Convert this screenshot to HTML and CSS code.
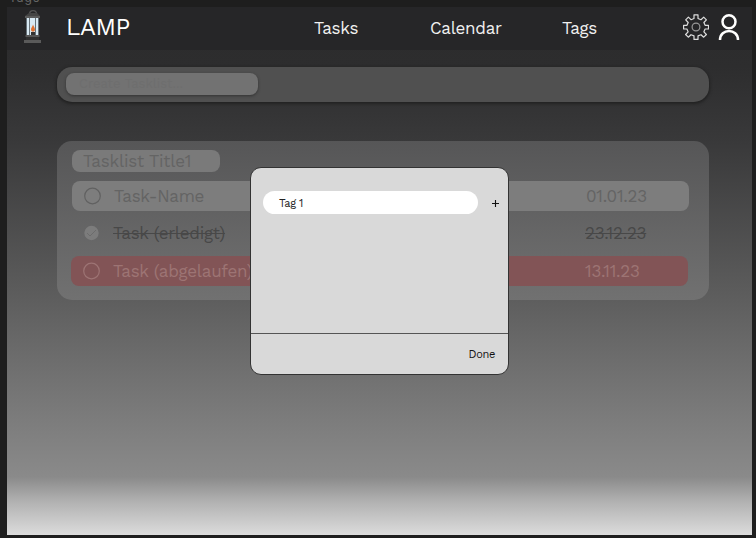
FILE: index.html
```html
<!DOCTYPE html>
<html lang="de">
<head>
<meta charset="utf-8">
<title>Lamp</title>
<link rel="stylesheet" href="styles.css">
</head>
<body>
<div class="label">Tags</div>
<div class="frame">
  <header class="header">
    <svg class="lamp" width="20" height="34" viewBox="0 0 20 34">
      <path d="M6.500 4C6.500-.5 13.500-.5 13.500 4" fill="none" stroke="#555" stroke-width="1.200"/>
      <path d="M6 3h8l3 3v2H2V6z" fill="#444"/>
      <path d="M2 6h15v2H2z" fill="#5a5a5a"/>
      <path d="M3 8h13v17H3z" fill="#d8e9f3"/>
      <path d="M3.500 8v17M6.500 8v17M12.500 8v17M15.500 8v17" stroke="#59636a" stroke-width=".9"/>
      <path d="M10 14.500C10.500 16.500 12 17.500 12 19.500C12 22.500 8 22.500 8 19.500C8 17.500 9.500 17 10 14.500z" fill="#df7130"/>
      <path d="M8 22h4v3H8z" fill="#333"/>
      <path d="M2.500 25h14v2h-14z" fill="#555"/>
      <path d="M3 27h13v3H3z" fill="#303030"/>
      <path d="M1 30h17v3H1z" fill="#5a5a5a"/>
    </svg>
    <div class="brand">LAMP</div>
    <nav class="nav"><a>Tasks</a><a>Calendar</a><a>Tags</a></nav>
    <svg class="gear" width="26" height="26" viewBox="0 0 26 26" fill="none" stroke="#ddd" stroke-width="1.2" stroke-linejoin="round">
      <path d="M11 .8h4v3.700l3 1.200 2.700-2.600 2.700 2.700-2.500 2.700 1.200 2.800h3.400v3.700h-3.400l-1.200 2.800 2.500 2.700-2.700 2.700-2.700-2.500-3 1.200v3.500h-4v-3.500l-3-1.200-2.700 2.500-2.700-2.700 2.500-2.700-1.200-2.800H.6v-3.700H4l1.200-2.800-2.500-2.700 2.700-2.700L8 5.700l3-1.200z"/>
      <circle cx="13" cy="13" r="3.900" stroke="#999"/>
    </svg>
    <svg class="user" width="22" height="28" viewBox="0 0 22 28" fill="none" stroke="#fff" stroke-width="2.500">
      <circle cx="11" cy="8.800" r="6.500"/>
      <path d="M2 27C2 15 20 15 20 27"/>
    </svg>
  </header>
  <main class="content">
    <section class="create"><div class="create-input">Create Tasklist...</div></section>
    <section class="list">
      <div class="title">Tasklist Title1</div>
      <div class="task">
        <svg class="check" width="18" height="18" viewBox="0 0 18 18"><circle cx="8.500" cy="9" r="7.800" fill="none" stroke="#616161" stroke-width="1.2"/></svg>
        <span class="name">Task-Name</span><span class="date">01.01.23</span>
      </div>
      <div class="task done">
        <svg class="check" width="18" height="18" viewBox="0 0 18 18"><circle cx="8.500" cy="9" r="7.200" fill="#7c7c7c"/><path d="M4 9l3 3 6-6" fill="none" stroke="#6c6c6c"/></svg>
        <span class="name">Task (erledigt)</span><span class="date">23.12.23</span>
      </div>
      <div class="task late">
        <svg class="check" width="18" height="18" viewBox="0 0 18 18"><circle cx="8.500" cy="9" r="7.800" fill="none" stroke="#9d7474" stroke-width="1.2"/></svg>
        <span class="name">Task (abgelaufen)</span><span class="date">13.11.23</span>
      </div>
    </section>
  </main>
</div>
<div class="modal">
  <div class="modal-body"><div class="tag">Tag 1</div>
    <svg class="plus" width="7" height="7" viewBox="0 0 7 7"><path d="M3.500 0v7M0 3.500h7" stroke="#111" stroke-width="1.100"/></svg>
  </div>
  <div class="modal-foot">Done</div>
</div>
</body>
</html>
```
FILE: styles.css
```css
* { box-sizing: border-box; }
body {
  margin: 0;
  width: 756px;
  height: 538px;
  overflow: hidden;
  background: #1e1e1e;
  font-family: "Work Sans", Inter, "Liberation Sans", sans-serif;
  font-size: 17px;
  font-weight: 400;
}
.label {
  height: 7px;
  padding-left: 9px;
  font-family: Inter, sans-serif;
  font-size: 12px;
  line-height: 7px;
  margin-top: -6px;
  margin-bottom: 6px;
  color: #666;
  letter-spacing: 1px;
}
.frame {
  width: 745px;
  height: 528px;
  margin-left: 7px;
  background: linear-gradient(#2b2b2c 0, #2d2d2e 60px, #39393a 135px, #5c5c5c 285px, #7f7f7f 425px, #8a8a8a 470px, #b2b2b2 495px, #dcdcdc 528px);
}
.header {
  display: flex;
  height: 43px;
  background: #262628;
  color: #f0f0f0;
}
.lamp { margin: 3px 0 0 16px; }
.brand {
  width: 248px;
  margin-left: 23px;
  font-size: 24px;
  line-height: 40px;
  letter-spacing: -.4px;
  color: #fff;
}
.nav {
  display: grid;
  grid-template-columns: 116px 132px 121px;
  line-height: 42px;
  letter-spacing: -.3px;
}
.gear { margin-top: 7px; }
.user { margin: 6px 0 0 9px; }
.content { padding: 17px 43px 0 50px; }
.create {
  height: 35px;
  padding: 6px 9px;
  border-radius: 15px;
  background: #505050;
  box-shadow: 0 1px 3px 1px #222;
}
.create-input {
  width: 192px;
  height: 22px;
  padding-left: 13px;
  border-radius: 8px;
  background: #727272;
  box-shadow: 0 1px 3px #333;
  color: #6e6e6e;
  font-size: 13px;
  line-height: 21px;
}
.list {
  height: 159px;
  margin-top: 39px;
  padding: 9px 20px 0 15px;
  border-radius: 15px;
  background: linear-gradient(#565657, #717171);
}
.title {
  width: 148px;
  height: 22px;
  padding-left: 11px;
  border-radius: 8px;
  background: #7a7a7a;
  color: #646464;
  line-height: 22px;
  letter-spacing: -.2px;
}
.task {
  display: flex;
  align-items: center;
  width: 617px;
  height: 30px;
  margin-top: 9px;
  padding-left: 12px;
  border-radius: 8px;
  background: #7d7d7d;
  color: #646464;
}
.name { width: 472px; margin-left: 12px; letter-spacing: -.27px; }
.date { letter-spacing: -.25px; }
.check { flex: none; }
.done { margin: 7px 0 0 -1px; background: none; color: #484848; }
.done .name, .done .date { text-decoration: line-through 1px; }
.late { margin: 8px 0 0 -1px; background: #825456; color: #9d7474; }
.modal {
  position: absolute;
  left: 250px;
  top: 167px;
  width: 259px;
  height: 208px;
  border: 1px solid #333;
  border-radius: 11px;
  background: #d9d9d9;
  color: #222;
  font-size: 11px;
  letter-spacing: -.3px;
}
.modal-body {
  display: flex;
  align-items: flex-start;
  height: 166px;
  padding: 23px 0 0 12px;
  border-bottom: 1px solid #555;
}
.tag {
  width: 215px;
  height: 23px;
  padding-left: 16px;
  border-radius: 12px;
  background: #fff;
  line-height: 25px;
}
.plus { margin: 9px 0 0 14px; }
.modal-foot {
  padding-right: 13px;
  text-align: right;
  line-height: 41px;
  color: #111;
}
```
